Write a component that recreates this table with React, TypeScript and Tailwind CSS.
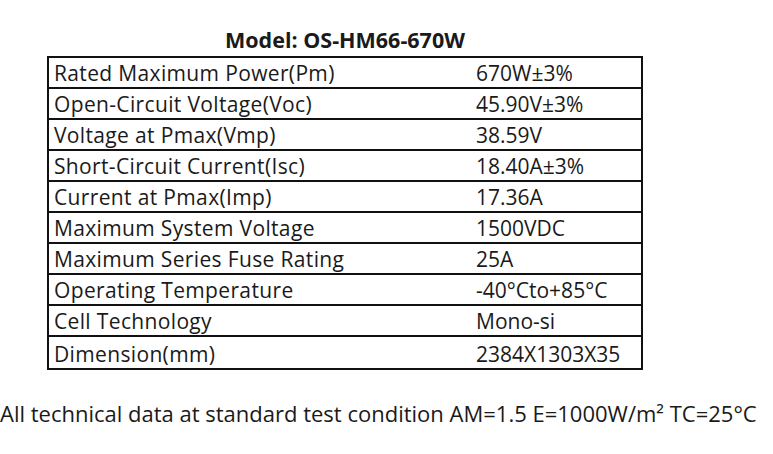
const rows: [string, string][] = [
  ["Rated Maximum Power(Pm)", "670W±3%"],
  ["Open-Circuit Voltage(Voc)", "45.90V±3%"],
  ["Voltage at Pmax(Vmp)", "38.59V"],
  ["Short-Circuit Current(Isc)", "18.40A±3%"],
  ["Current at Pmax(Imp)", "17.36A"],
  ["Maximum System Voltage", "1500VDC"],
  ["Maximum Series Fuse Rating", "25A"],
  ["Operating Temperature", "-40°Cto+85°C"],
  ["Cell Technology", "Mono-si"],
  ["Dimension(mm)", "2384X1303X35"],
]

export default function App() {
  return (
    <div
      className="w-[773px] h-[454px] bg-white text-[#1a1a1a] overflow-hidden"
      style={{ fontFamily: '"Open Sans", "Noto Sans", sans-serif' }}
    >
      {/* Title */}
      <div className="w-[596px] ml-[47px] pt-[26px] text-center text-[21.5px] leading-[28px] font-bold">
        Model: OS-HM66-670W
      </div>

      {/* Spec table */}
      <div className="ml-[47px] mt-[2px] w-[596px] border-2 border-[#111]">
        {rows.map(([label, value], i) => (
          <div
            key={label}
            className={`flex h-[31px] items-end text-[21px] leading-[27px] ${
              i < rows.length - 1 ? "border-b-2 border-[#111]" : ""
            }`}
          >
            <div className="w-[427px] pl-[5px] whitespace-nowrap tracking-[0.35px]">{label}</div>
            <div className="flex-1 whitespace-nowrap">{value}</div>
          </div>
        ))}
      </div>

      {/* Footnote */}
      <div className="mt-[29px] whitespace-nowrap text-[22px] leading-[28px]">
        All technical data at standard test condition AM=1.5 E=1000W/m² TC=25°C
      </div>
    </div>
  )
}
